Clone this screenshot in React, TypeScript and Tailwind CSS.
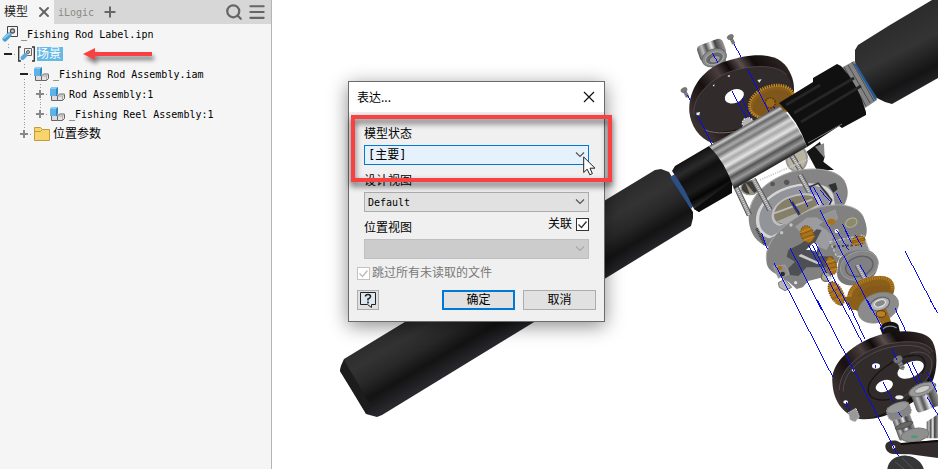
import type { ReactNode } from 'react'
import { Menu, Plus, Search, X } from 'lucide-react'

const MONO = "font-['DejaVu_Sans_Mono','Noto_Sans_CJK_SC',monospace]"

/* ---------- browser icons ---------- */

const ViewIcon = () => (
  <svg viewBox="0 0 16 16" className="size-4">
    <path d="M5.500.5h10v10h-10z" fill="#f2f2f2" stroke="#444" />
    <circle cx="10.500" cy="5" r="2" fill="#ccc" stroke="#555" strokeWidth="1.300" />
    <path d="M3 13 7 9" stroke="#4d9cd0" strokeWidth="5" strokeLinecap="round" />
    <path d="m2 12 5-4" stroke="#8cc9f0" strokeWidth="2" strokeLinecap="round" />
  </svg>
)

const SceneIcon = () => (
  <svg viewBox="0 0 18 16" className="h-4 w-[18px]">
    <path d="M3 1H.7v14H3M14 1h2.300v14H14" fill="none" stroke="#333" strokeWidth="1.300" />
    <path d="M6.500 2.500h7v7h-7z" fill="#f2f2f2" stroke="#666" />
    <circle cx="10" cy="6" r="1.500" fill="#ccc" stroke="#555" />
    <path d="m4.500 12 3-3" stroke="#57a8dc" strokeWidth="4" strokeLinecap="round" />
  </svg>
)

const AssemblyIcon = () => (
  <svg viewBox="0 0 16 16" className="size-4">
    <path d="M1.500 9.500h6v5h-6z" fill="#ddd" stroke="#666" />
    <path d="M7.500 14.500V10l2-2h5v4.500l-2 2z" fill="#e4e4e4" stroke="#666" />
    <path d="M7.500 10h5v4M12.500 10l2-2" fill="none" stroke="#aaa" />
    <path d="M0 3 2 1h6v7l-2 2H0z" fill="#2f86c4" />
    <path d="M0 3h6v7H0z" fill="#5fb2e8" />
    <path d="m0 3 2-2h6L6 3z" fill="#8accf3" />
  </svg>
)

const FolderIcon = () => (
  <svg viewBox="0 0 18 16" className="h-4 w-[18px]">
    <path d="M.5 14.500v-13h6l2 2h7v11z" fill="#f8d56c" stroke="#c39c3c" />
    <path d="M1 5.500h5.500l2-2" fill="none" stroke="#c39c3c" />
  </svg>
)

/* ---------- browser tree ---------- */

type ExpanderProps = { open?: boolean; up?: boolean; down?: boolean }

const Expander = ({ open, up, down }: ExpanderProps) => (
  <svg viewBox="0 0 16 20" className="h-5 w-4 shrink-0">
    <path d={open ? 'M4 10h8' : 'M4 10h8M8 6v8'} stroke={open ? '#222' : '#888'} strokeWidth="2" />
    <path d="M14 10.500h2" stroke="#999" strokeDasharray="1 1" />
    {up && <path d="M8.500 0v5" stroke="#999" strokeDasharray="1 2" />}
    {down && <path d="M8.500 15v5" stroke="#999" strokeDasharray="1 2" />}
  </svg>
)

const Guide = () => (
  <svg viewBox="0 0 16 20" className="h-5 w-4 shrink-0">
    <path d="M8.500 0v20" stroke="#999" strokeDasharray="1 2" />
  </svg>
)

const Row = ({ lead, icon, children }: { lead?: ReactNode; icon: ReactNode; children: ReactNode }) => (
  <li className="flex h-5 items-center whitespace-nowrap text-[10px] text-black">
    {lead}
    <span className="flex w-[21px] shrink-0 pl-[2px]">{icon}</span>
    {children}
  </li>
)

const RedArrow = () => (
  <svg viewBox="0 0 70 14" className="ml-5 h-[14px] w-[70px] overflow-visible drop-shadow-[2px_4px_2px_rgba(0,0,0,0.5)]">
    <path d="M0 7 12 1v4h57v4H12v4z" fill="#f94141" />
  </svg>
)

const ModelBrowser = () => (
  <aside className="w-[272px] shrink-0 border-r border-[#b4b4b4] bg-[#f5f5f5]">
    <div className="flex h-6 items-center bg-[#d7d7d7] text-[#666]">
      <div className="flex h-6 w-[54px] items-center gap-2 bg-[#f5f5f5] pl-1">
        <button className="text-[12px] text-[#222]">模型</button>
        <button aria-label="关闭"><X className="size-4" strokeWidth={3} /></button>
      </div>
      <button className="pl-1 text-[10px] text-[#888]">iLogic</button>
      <button aria-label="添加" className="ml-2"><Plus className="size-4" strokeWidth={3} /></button>
      <button aria-label="搜索" className="ml-auto"><Search className="size-[18px]" strokeWidth={3} /></button>
      <button aria-label="菜单" className="mr-1 ml-1"><Menu className="size-5" strokeWidth={2.5} /></button>
    </div>
    <ul>
      <Row icon={<ViewIcon />}>_Fishing Rod Label.ipn</Row>
      <Row lead={<Expander open up />} icon={<SceneIcon />}>
        <span className="w-[26px] bg-[#64b9e6] text-[12px] leading-[14px] text-white">场景</span>
        <RedArrow />
      </Row>
      <Row lead={<><span className="w-4" /><Expander open up down /></>} icon={<AssemblyIcon />}>
        _Fishing Rod Assembly.iam
      </Row>
      <Row lead={<><span className="w-4" /><Guide /><Expander up down /></>} icon={<AssemblyIcon />}>
        Rod Assembly:1
      </Row>
      <Row lead={<><span className="w-4" /><Guide /><Expander up /></>} icon={<AssemblyIcon />}>
        _Fishing Reel Assembly:1
      </Row>
      <Row lead={<><span className="w-4" /><Expander up /></>} icon={<FolderIcon />}>
        <span className="text-[12px]">位置参数</span>
      </Row>
    </ul>
  </aside>
)

/* ---------- exploded view ---------- */

const Wires = ({ d }: { d: string }) => (
  <path d={d} fill="none" stroke="#0a0af0" strokeWidth="3" shapeRendering="crispEdges" />
)

const Brass = ({ x, y, rx, ry, turn }: { x: number; y: number; rx: number; ry: number; turn: number }) => (
  <g transform={`translate(${x} ${y}) rotate(${turn})`}>
    <ellipse rx={rx} ry={ry} fill="#a8731c" />
    <ellipse rx={rx} ry={ry} fill="none" stroke="#7a510f" strokeWidth="4" strokeDasharray="4 3" />
    <path d={`M${-rx} ${-ry / 2}H${rx}M${-rx} ${ry / 2}H${rx}`} stroke="#c98b25" strokeWidth="3" />
    <path d={`M${-rx} ${-ry / 4}H${rx}M${-rx} ${ry / 4}H${rx}`} stroke="#7a510f" strokeWidth="2" />
  </g>
)

const Screw = ({ x, y, s }: { x: number; y: number; s: number }) => (
  <g transform={`translate(${x} ${y}) rotate(-27) scale(${s})`}>
    <path d="M-5 0H5V22L0 26-5 22z" fill="#8a8a8a" />
    <path d="M-5 8H5M-5 14H5M-5 20H5" stroke="#555" strokeWidth="2" />
    <ellipse rx="10" ry="7" fill="#777" stroke="#555" />
  </g>
)

// threaded post between two plates
const Post = ({ d }: { d: string }) => (
  <>
    <path d={d} stroke="#4a4a4a" strokeWidth="16" />
    <path d={d} stroke="#8c8c8c" strokeWidth="12" />
    <path d={d} stroke="#dcdcdc" strokeWidth="7" strokeDasharray="3 3" />
  </>
)

const ExplodedView = () => (
  <svg viewBox="272 0 666 469" preserveAspectRatio="xMinYMin slice" className="block h-full w-full">
    <defs>
      <linearGradient id="grip" gradientUnits="userSpaceOnUse" x1="500" y1="264" x2="534" y2="322">
        <stop offset="0" stopColor="#2c2c2c" />
        <stop offset=".25" stopColor="#333" />
        <stop offset=".5" stopColor="#282828" />
        <stop offset=".74" stopColor="#131313" />
        <stop offset="1" stopColor="#28272c" />
      </linearGradient>
      <linearGradient id="gripTop" gradientUnits="userSpaceOnUse" x1="890" y1="25" x2="923" y2="88">
        <stop offset="0" stopColor="#2c2c2c" />
        <stop offset=".4" stopColor="#343434" />
        <stop offset=".8" stopColor="#141414" />
        <stop offset="1" stopColor="#242327" />
      </linearGradient>
      <linearGradient id="collar" gradientUnits="userSpaceOnUse" x1="690" y1="157" x2="716" y2="202">
        <stop offset="0" stopColor="#111" />
        <stop offset=".2" stopColor="#2b2b2b" />
        <stop offset=".35" stopColor="#101010" />
        <stop offset=".6" stopColor="#1d1d1d" />
        <stop offset=".75" stopColor="#050505" />
        <stop offset=".92" stopColor="#333" />
        <stop offset="1" stopColor="#000" />
      </linearGradient>
      <linearGradient id="steel" gradientUnits="userSpaceOnUse" x1="744" y1="126" x2="768" y2="168">
        <stop offset="0" stopColor="#555" />
        <stop offset=".06" stopColor="#ccc" />
        <stop offset=".12" stopColor="#666" />
        <stop offset=".2" stopColor="#aaa" />
        <stop offset=".27" stopColor="#777" />
        <stop offset=".36" stopColor="#d8d8d8" />
        <stop offset=".44" stopColor="#aaa" />
        <stop offset=".54" stopColor="#e4e4e4" />
        <stop offset=".62" stopColor="#909090" />
        <stop offset=".7" stopColor="#c0c0c0" />
        <stop offset=".78" stopColor="#555" />
        <stop offset=".88" stopColor="#999" />
        <stop offset="1" stopColor="#2d2d2d" />
      </linearGradient>
      <linearGradient id="rim" x1="0" y1=".6" x2="1" y2="0">
        <stop offset="0" stopColor="#3b3030" />
        <stop offset=".2" stopColor="#171010" />
        <stop offset=".38" stopColor="#4a3d3d" />
        <stop offset=".48" stopColor="#0f0a0a" />
        <stop offset=".58" stopColor="#5b4e4e" />
        <stop offset=".68" stopColor="#120c0c" />
        <stop offset="1" stopColor="#3a3030" />
      </linearGradient>
      <linearGradient id="chrome">
        <stop offset="0" stopColor="#555" />
        <stop offset=".2" stopColor="#bbb" />
        <stop offset=".35" stopColor="#555" />
        <stop offset=".55" stopColor="#eee" />
        <stop offset=".7" stopColor="#444" />
        <stop offset="1" stopColor="#999" />
      </linearGradient>
    </defs>

    {/* upper side plate with knob, screws and drive gear */}
    <g transform="translate(670 0) scale(.3333)">
      <path d="M120 180 130 215 175 195 160 165z" fill="#888" />
      <g transform="translate(128 160) rotate(-20)">
        <rect x="-41" y="-36" width="82" height="52" rx="14" fill="url(#chrome)" />
        <ellipse cy="14" rx="38" ry="26" fill="#8b8b8b" stroke="#5a5a5a" strokeWidth="2" />
        <ellipse cy="16" rx="28" ry="18" fill="#6a6a6a" stroke="#aaa" strokeWidth="3" />
        <ellipse cy="19" rx="17" ry="10" fill="#999" stroke="#555" strokeWidth="2" />
      </g>
      <path d="M58 335C54 275 90 215 155 188C235 160 300 158 335 185C360 205 373 240 372 270L365 330 130 430C85 415 62 375 58 335z" fill="url(#rim)" />
      <path d="M72 345C66 290 118 240 180 215C250 192 325 194 350 225C366 245 371 265 370 290L215 385C150 402 82 398 72 345z" fill="#322b2c" />
      <path d="M72 345C66 290 118 240 180 215C250 192 325 194 350 225" fill="none" stroke="#5c5050" strokeWidth="2" />
      <path d="M105 390C140 404 190 400 225 385" fill="none" stroke="#776b6b" strokeWidth="3" />
      <ellipse cx="193" cy="289" rx="30" ry="20" transform="rotate(-22 193 289)" fill="#fff" />
      <path d="M79 338 90 336 88 346 80 346zM262 240 275 238 268 248zM172 228 180 224 178 232zM128 256 134 253 132 260z" fill="#eee" />
      <g transform="rotate(-20 305 305)">
        <ellipse cx="305" cy="307" rx="70" ry="47" fill="#8a5f1a" />
        <ellipse cx="305" cy="305" rx="69" ry="46" fill="none" stroke="#c98b25" strokeWidth="9" strokeDasharray="4 3" />
        <ellipse cx="305" cy="310" rx="60" ry="38" fill="#80571a" />
        <circle cx="300" cy="307" r="15" fill="#9a6a1c" stroke="#50360b" strokeWidth="4" strokeDasharray="5 3" />
      </g>
      <circle cx="234" cy="370" r="17" fill="#b5b5b5" stroke="#eee" strokeWidth="4" strokeDasharray="4 4" />
      <Screw x={181} y={111} s={1} />
      <Screw x={42} y={270} s={1} />
      <Wires d="M193 133 212 170M233 208 297 335M185 272 230 355M215 293 242 350M83 345 128 438M52 285 60 300M127 160 145 190M310 318 316 330" />
    </g>

    {/* frame, plates and gear train */}
    <g transform="translate(670 150) scale(.3333)">
      <path d="M410 5 450-25 464 20 460 35 492 60 440 60z" fill="#151515" />
      <path d="M435-10 462-20 464 25z" fill="#888" />
      <ellipse cx="380" cy="25" rx="31" ry="38" fill="#b9b5a0" stroke="#999" strokeWidth="6" />
      <Post d="m355 0 38 62" />
      <path d="M270 90 420 25" stroke="#ccc" strokeWidth="5" strokeDasharray="4 3" />
      <ellipse cx="240" cy="113" rx="27" ry="21" fill="#403e39" stroke="#999" strokeWidth="4" />
      <path d="M240 135 225 95 255 132z" fill="#968f7a" />
      <path d="M236 200C240 130 300 85 370 64C440 48 505 60 525 95C540 125 532 150 520 170L295 290C255 280 235 240 236 200z" fill="#858585" />
      <path d="M236 195C240 130 300 85 370 64C440 48 505 60 525 95" fill="none" stroke="#a9a9a9" strokeWidth="3" />
      <path d="M258 215C255 160 310 115 385 102C440 94 480 105 490 135L495 165 300 265C275 262 260 240 258 215z" fill="#d5d5d5" />
      <path d="M268 215C262 165 315 122 385 109C435 101 470 110 480 140L475 165 305 258C282 254 270 235 268 215z" fill="#93939a" />
      <path d="M305 200C305 160 350 135 400 130C440 128 455 145 455 165L330 228C315 225 306 215 305 200z" fill="#c0c0c2" />
      <path d="M312 195C315 160 352 140 400 136C435 135 445 148 442 165L335 222C320 220 312 210 312 195z" fill="#857f68" />
      <path d="m312 190 115-42" stroke="#bbb" strokeWidth="6" />
      <path d="m318 215 60-25 40 5-70 28z" fill="#aaa" />
      <path d="m365 155 25 42" stroke="#444" strokeWidth="9" />
      <Post d="M198 110 238 195" />
      <Post d="M250 88 300 180" />
      <Post d="M390 75 418 125" />
      <path d="M260 235 285 285" stroke="#333" strokeWidth="9" strokeDasharray="3 2" />
      <circle cx="308" cy="102" r="7" fill="#555" />
      <circle cx="350" cy="97" r="8" fill="#555" />
      <path d="M420 110 445 100 485 150 478 165" fill="none" stroke="#333" strokeWidth="5" />
      <path d="M475 105 497 98 503 118 490 128z" fill="#2e3331" />

      <path d="M289 330C284 270 350 212 420 180C490 155 560 160 580 200C592 225 594 250 584 265L520 300 485 375 415 393 398 412 380 417 355 395 318 372C296 360 290 350 289 330z" fill="#818181" />
      <path d="M289 325C286 270 350 212 420 180C490 155 560 160 580 200" fill="none" stroke="#aaa" strokeWidth="3" />
      <path d="M375 230 410 203 440 202 460 215 447 225 470 240 490 260 470 300 430 285z" fill="#9c9ca0" />
      <path d="M355 300 395 280 440 238 455 240 435 278 450 300 445 318 490 320 470 352 410 352 385 378 360 375 355 355 375 335 350 320z" fill="#4e4f53" />
      <path d="M408 300 430 278 445 285 440 305 420 300z" fill="#fff" />
      <path d="m385 318 8-6 60 28-12 2z" fill="#c8c8ca" />
      <path d="M460 195 495 180 503 205 478 225z" fill="#949494" stroke="#a5a5a5" strokeWidth="2" />
      <ellipse cx="484" cy="215" rx="12" ry="9" fill="#a8731c" />
      <ellipse cx="544" cy="218" rx="18" ry="13" transform="rotate(-25 544 218)" fill="#8c8a6b" stroke="#b5b395" strokeWidth="3" />
      <circle cx="363" cy="225" r="5" fill="#c5c5c5" />
      <circle cx="335" cy="248" r="5" fill="#c5c5c5" />
      <circle cx="500" cy="243" r="6" fill="#fff" />
      <path d="M310 350 345 345 358 372 325 385z" fill="#8e8e8e" stroke="#aaa" strokeWidth="2" />
      <circle cx="330" cy="354" r="7" fill="#a8731c" />
      <circle cx="338" cy="372" r="7" fill="#2b2b2b" />
      <path d="M325 398 345 388 365 412 345 422 328 412z" fill="#b5b5b5" stroke="#777" strokeWidth="3" />
      <circle cx="377" cy="398" r="5" fill="#ddd" />
      <path d="M480 275 580 255 600 305 500 320z" fill="#8f8f8f" stroke="#c5c5c5" strokeWidth="4" strokeDasharray="8 5" />
      <path d="M490 290 560 285" stroke="#444" strokeWidth="6" strokeDasharray="7 6" />
      <Brass x={412} y={253} rx={19} ry={26} turn={-20} />
      <Brass x={565} y={272} rx={20} ry={13} turn={-15} />
      <Brass x={484} y={347} rx={15} ry={27} turn={-15} />
      <Brass x={499} y={430} rx={19} ry={38} turn={-27} />
      <circle cx="468" cy="380" r="14" fill="#a9a88b" stroke="#666" strokeWidth="4" />
      <circle cx="478" cy="385" r="7" fill="#ddd" />

      <path d="M505 340C505 310 560 292 600 303C635 315 632 375 590 395C550 415 502 410 501 370z" fill="#777" />
      <ellipse cx="568" cy="347" rx="58" ry="42" transform="rotate(-18 568 347)" fill="#858587" stroke="#999" strokeWidth="3" />
      <ellipse cx="568" cy="349" rx="42" ry="29" transform="rotate(-18 568 349)" fill="#808084" stroke="#5f5f5f" strokeWidth="4" />
      <Post d="m562 345 22 40" />
      <path d="M532 445C530 405 580 375 635 378C665 380 678 400 672 425L650 480H545z" fill="#8a5f1a" />
      <path d="M540 440C540 410 585 382 635 383C660 385 670 400 667 420" fill="none" stroke="#b87d20" strokeWidth="11" strokeDasharray="4 3" />
      <path d="M538 435 550 480" stroke="#b87d20" strokeWidth="12" strokeDasharray="4 3" />
      <path d="M560 440C575 415 610 400 660 410L640 470H570z" fill="#85591a" />
    </g>

    {/* spool side plate and handle */}
    <g transform="translate(780 300) scale(.3333)">
      <path d="M165 0H190L185 18 168 10z" fill="#a8731c" />
      <path d="M190-10H260L240 38 200 12z" fill="#8a5f1a" />
      <ellipse cx="295" cy="23" rx="63" ry="43" transform="rotate(-22 295 23)" fill="#8b8b8b" stroke="#7d7d7d" strokeWidth="2" />
      <ellipse cx="300" cy="12" rx="30" ry="19" transform="rotate(-20 300 12)" fill="#b4b4b4" stroke="#666" strokeWidth="4" />
      <ellipse cx="300" cy="10" rx="17" ry="10" transform="rotate(-20 300 10)" fill="#888" stroke="#eee" strokeWidth="3" />
      <path d="M287 38 318 25 335 70 308 80z" fill="#94651b" />
      <ellipse cx="303" cy="42" rx="14" ry="10" fill="#bb8023" stroke="#5e3d0b" strokeWidth="3" />
      <path d="M300 85C305 65 340 58 355 75L362 105 310 110z" fill="#131313" />
      <path d="M308 87C320 76 340 76 350 84" fill="none" stroke="#888" strokeWidth="4" />
      <path d="M157 245C152 190 215 130 300 104C370 86 440 92 458 125C475 160 472 215 455 250C420 310 310 365 240 357C195 345 160 310 157 245z" fill="url(#rim)" />
      <path d="M178 270C178 205 245 152 320 133C390 118 445 125 458 155C474 190 450 245 400 285C350 330 285 358 240 354C205 348 180 320 178 270z" fill="#322b2c" />
      <path d="M178 270C178 205 245 152 320 133C390 118 445 125 458 155M190 275C188 215 250 162 325 143C380 130 430 135 450 160" fill="none" stroke="#544848" strokeWidth="3" />
      <path d="M385 170C435 155 445 190 425 220M330 298C290 305 260 295 265 260C275 225 345 170 400 165" fill="none" stroke="#1a1414" strokeWidth="4" />
      <path d="M390 160C430 148 460 165 455 200C450 235 430 260 350 300" fill="none" stroke="#665b5b" strokeWidth="2" />
      <ellipse cx="392" cy="209" rx="42" ry="23" transform="rotate(-24 392 209)" fill="#fff" />
      <ellipse cx="313" cy="258" rx="27" ry="17" transform="rotate(-20 313 258)" fill="#fff" />
      <ellipse cx="288" cy="198" rx="12" ry="8" fill="#fff" />
      <ellipse cx="197" cy="306" rx="7" ry="5" fill="#fff" />
      <ellipse cx="358" cy="292" rx="12" ry="6" fill="#eee" />
      <circle cx="220" cy="211" r="4" fill="#eee" />
      <path d="M395 318H474V380H400z" fill="#fff" />
      <g transform="translate(433 285) rotate(-20)">
        <rect x="-38" y="-25" width="76" height="70" rx="12" fill="url(#chrome)" />
        <ellipse cy="-18" rx="42" ry="18" fill="#999" stroke="#666" strokeWidth="4" strokeDasharray="6 3" />
        <ellipse cy="-18" rx="24" ry="9" fill="#ccc" stroke="#666" strokeWidth="2" />
      </g>
      <g transform="translate(357 334) rotate(-20)">
        <rect x="-28" y="0" width="56" height="85" rx="8" fill="url(#chrome)" />
        <ellipse cy="45" rx="28" ry="8" fill="#666" stroke="#444" strokeWidth="2" />
        <rect x="-36" y="-22" width="72" height="42" rx="14" fill="#858585" stroke="#999" strokeWidth="3" strokeDasharray="5 3" />
        <ellipse cy="-12" rx="34" ry="14" fill="#999" stroke="#777" strokeWidth="2" />
      </g>
      <path d="M440 365 474 343V415H440z" fill="url(#chrome)" />
      <ellipse cx="405" cy="405" rx="42" ry="20" transform="rotate(-10 405 405)" fill="#8f8f8f" stroke="#777" strokeWidth="3" />
      <ellipse cx="403" cy="410" rx="10" ry="4" fill="#4c9a78" />
      <path d="M316 440C315 425 335 420 350 422L365 430 474 420V474L390 463 340 462C325 460 317 450 316 440z" fill="#332c2d" />
      <path d="M362 432 474 423" stroke="#0d0a0a" strokeWidth="6" />
      <circle cx="341" cy="441" r="5" fill="#fff" />
      <path d="M322 507C325 480 350 465 380 467C410 470 428 490 432 510z" fill="#363739" />
      <path d="M345 485 372 507M365 472 400 507" stroke="#555" strokeWidth="3" />
      <Screw x={354} y={178} s={1.4} />
      <path d="M205 338 228 325 238 350 226 366 210 360z" fill="#999" stroke="#ddd" strokeWidth="3" strokeDasharray="4 3" />
    </g>

    {/* rod: lower grip, collar, seat, threads, upper grip */}
    <path d="M344 359 655 170 661 169 669 172 693 212 693 218 691 226 382 415 377 417 366 414 340 371 341 366z" fill="url(#grip)" />
    <path d="m344 360 26 44-3 10-27-43 1-5z" fill="#1c1c1c" />
    <path d="m670 177 5-3 19 31-3 4z" fill="#2c4f86" />
    <path d="m672 171 3-5 34-20q16 14 24 39l-34 27-5-3q-10-22-22-38z" fill="url(#collar)" />
    <path d="m694 209 5 3 33-19v-12z" fill="#0c0c0c" />
    <path d="m709 146 70-40q18 15 28 41l-73 42q-8-26-25-43z" fill="url(#steel)" />
    <path d="m841 68 13-7q16 14 23 39l-12 8z" fill="#838383" />
    <path d="m844 67 22 39m-18-41 22 38m-18-41 22 39" stroke="#4d4d4d" />
    <path d="m779 103 34-21v-4l24-14 4 2q17 18 25 46v3l-24 13-3-2-32 21q-9-27-28-44z" fill="#101010" />
    <path d="m786 105 34-20m-26 28 60-35m-53 44 60-36" stroke="#262626" strokeWidth="3" />
    <path d="m808 143 34-19" stroke="#777" />
    <path d="m854 64 3-1 20 35-2 2z" fill="#23599b" />
    <path d="m855 50 3-5 32-20 42-25h6v78l-46 26-7-2-8-4-22-36z" fill="url(#gripTop)" />

    {/* explosion trails */}
    <g transform="translate(670 150) scale(.3333)">
      <Wires d="M275 250 292 298M313 340 386 480M360 293 455 480M415 285 525 480M428 285 470 370M437 280 540 480M450 180 605 480M518 222 545 280M500 240 535 300M525 240 545 280M358 148 388 190M388 120 415 172M418 108 445 165M430 110 460 165M450 120 485 160M500 130 515 160M705 303 797 480M570 345 590 380M557 255 575 290" />
    </g>
    <g transform="translate(780 300) scale(.3333)">
      <Wires d="M40 0 158 230M112 0 355 468M185 10 245 125M205 10 255 118M262 0 312 95M345 25 378 95M450 0 477 45M335 145 350 180M380 185 412 250M395 185 425 250M440 215 470 275M308 245 340 305M197 305 208 330M355 335 365 352M440 290 477 350M288 195 288 205" />
    </g>
  </svg>
)

/* ---------- dialog ---------- */

type FieldProps = { id: string; label: string; value?: string; disabled?: boolean; className: string; extra?: ReactNode }

const Field = ({ id, label, value = '', disabled, className, extra }: FieldProps) => (
  <div>
    <div className="mb-px flex h-5 items-start justify-between">
      <label htmlFor={id} className="leading-5">{label}</label>
      {extra}
    </div>
    <div className="grid items-center">
      <select
        id={id}
        disabled={disabled}
        className={`col-start-1 row-start-1 h-5 w-full appearance-none border pl-[3px] opacity-100 outline-none ${className}`}
      >
        <option>{value}</option>
      </select>
      <svg viewBox="0 0 10 6" className="pointer-events-none col-start-1 row-start-1 mr-1 h-[6px] w-[10px] justify-self-end">
        <path d="m1 .5 4 4 4-4" fill="none" stroke={disabled ? '#aaa' : '#555'} strokeWidth="1.200" />
      </svg>
    </div>
  </div>
)

const Check = ({ id, disabled }: { id: string; disabled?: boolean }) => (
  <span className="grid size-[13px]">
    <input
      id={id}
      type="checkbox"
      defaultChecked
      disabled={disabled}
      className="col-start-1 row-start-1 size-[13px] appearance-none border border-[#333] bg-white disabled:border-[#c4c4c4]"
    />
    <svg viewBox="0 0 13 13" className="pointer-events-none col-start-1 row-start-1 size-[13px]">
      <path d="m2.500 6.500 3 3 5-6" fill="none" stroke={disabled ? '#bbb' : '#333'} strokeWidth="1.300" />
    </svg>
  </span>
)

const RepresentationsDialog = () => (
  <div
    role="dialog"
    aria-labelledby="dialog-title"
    className="absolute top-[81px] left-[348px] w-[257px] border border-[#6b6b6b] bg-[#f0f0f0] pb-[11px] text-[12px] text-black shadow-[0_4px_18px_rgba(0,0,0,0.45)]"
  >
    <header className="flex h-[30px] items-center justify-between bg-white px-2">
      <h1 id="dialog-title" className="font-['Noto_Sans_CJK_SC',sans-serif]">表达...</h1>
      <button aria-label="关闭">
        <svg viewBox="0 0 14 14" className="size-[14px]">
          <path d="m2 2 10 10M12 2 2 12" stroke="#111" strokeWidth="1.200" />
        </svg>
      </button>
    </header>

    <div className="flex flex-col gap-[6px] px-[15px] pt-3">
      <Field id="model-state" label="模型状态" value="[主要]" className="border-[#0078d7] bg-[#e5f1fb] text-[12px]" />
      <Field id="design-view" label="设计视图" value="Default" className="border-[#adadad] bg-[#e1e1e1] text-[10px]" />
      <Field
        id="position-view"
        label="位置视图"
        disabled
        className="border-[#bfbfbf] bg-[#ccc] text-[12px]"
        extra={
          <span className="flex items-center gap-1 leading-[13px]">
            <label htmlFor="associative">关联</label>
            <Check id="associative" />
          </span>
        }
      />
    </div>

    <div className="mt-2 flex items-center gap-[2px] px-2 leading-[13px] text-[#787878]">
      <Check id="skip-unread" disabled />
      <label htmlFor="skip-unread">跳过所有未读取的文件</label>
    </div>

    <div className="mt-[10px] flex gap-2 px-2">
      <button aria-label="帮助" className="mr-auto flex h-5 w-[22px] items-center justify-center border border-[#adadad] bg-[#e1e1e1]">
        <svg viewBox="0 0 18 18" className="size-[18px]">
          <path d="M1.500 1.500h15v12h-4v3l-4-3h-7z" fill="#dfe8f0" stroke="#222" />
          <path d="M6.500 5.500q0-2 2.500-2t2.500 2q0 1.500-2.500 2.500v1.500M9 10.500v2" fill="none" stroke="#222" strokeWidth="1.600" />
        </svg>
      </button>
      <button className="h-5 w-[73px] border-2 border-[#0078d7] bg-[#e1e1e1] leading-4">确定</button>
      <button className="h-5 w-[73px] border border-[#adadad] bg-[#e1e1e1] leading-[18px]">取消</button>
    </div>

    <div className="pointer-events-none absolute top-[33px] left-[2px] h-[67px] w-[261px] border-4 border-[#f94141] drop-shadow-[0_4px_3px_rgba(0,0,0,0.65)]" />
    <svg viewBox="0 0 13 20" className="pointer-events-none absolute top-[74px] left-[234px] h-5 w-[13px]">
      <path d="M.7 1v15.500l3.500-3.300 2.600 5.600 2.600-1.200L7 12.200h5z" fill="#fff" stroke="#222" />
    </svg>
  </div>
)

export default function App() {
  return (
    <div className={`relative flex min-h-screen overflow-hidden bg-white ${MONO}`}>
      <ModelBrowser />
      <main className="min-w-0 flex-1">
        <ExplodedView />
      </main>
      <RepresentationsDialog />
    </div>
  )
}
